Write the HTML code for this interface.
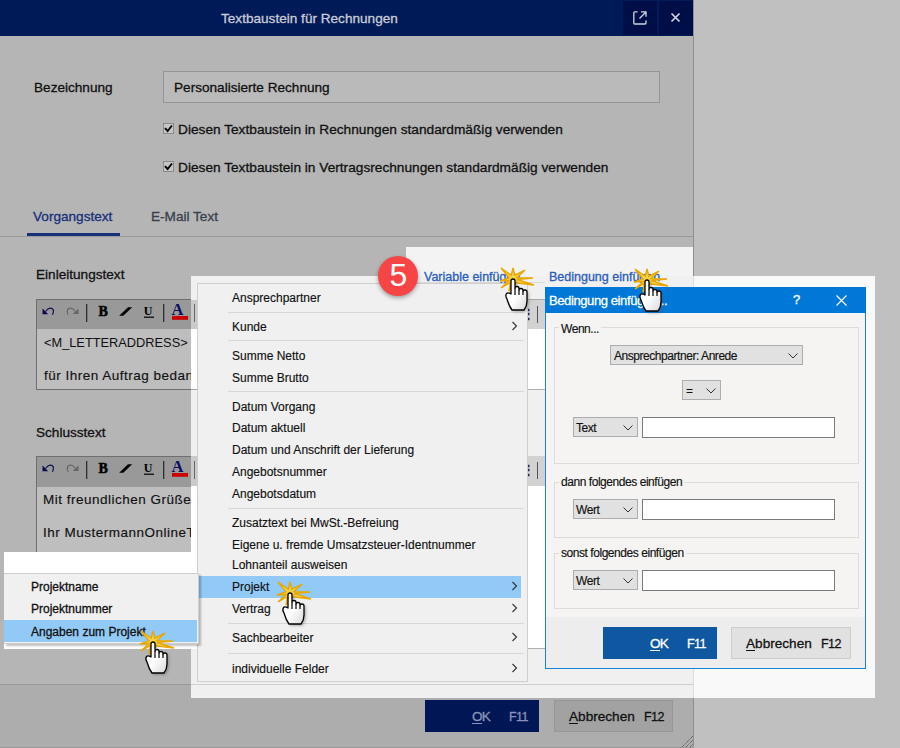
<!DOCTYPE html>
<html><head><meta charset="utf-8">
<style>
*{box-sizing:border-box;margin:0;padding:0}
html,body{width:900px;height:748px;overflow:hidden;background:#c0c0c0;font-family:"Liberation Sans",sans-serif;color:#111}
.a{position:absolute}
.t.m{left:232px;font-size:12px;color:#111;-webkit-text-stroke:0.15px}
.cb{background:#e1e1e1;border:1px solid #adadad}
.inp{background:#fff;border:1px solid #7a7a7a}
.t{position:absolute;white-space:nowrap;line-height:1;-webkit-text-stroke:0.3px currentColor}
</style></head><body>
<svg width="0" height="0" style="position:absolute"><defs>
<filter id="sh" x="-50%" y="-50%" width="200%" height="200%"><feGaussianBlur stdDeviation="1.6"/></filter>
<linearGradient id="hg" x1="0" y1="0" x2="1" y2="1"><stop offset="0.5" stop-color="#fff"/><stop offset="1" stop-color="#d8d8d8"/></linearGradient>
<symbol id="cur" viewBox="-20 -16 48 52" width="48" height="52">
<polygon points="-12.0,-11.0 -1.7,-3.8 0.0,-11.0 1.9,-3.8 12.0,-9.0 4.0,-1.4 20.0,-1.0 4.2,0.5 21.0,6.0 2.0,3.7 -4.0,12.0 -2.5,3.4 -12.0,9.0 -3.9,1.6 -13.0,2.0 -4.0,-1.2" fill="#f4d24a" stroke="#e8a800" stroke-width="1.4" stroke-linejoin="miter" stroke-miterlimit="3"/>
<path d="M-6 20Q-8 17 -6.5 14.5Q-5 13 -2 15V2Q-2 0 0 0Q2 0 2 2V9Q2 7.5 4 7.5Q6 7.5 6 9.5V11Q6 9.5 8 9.5Q10 9.5 10 11.5V12.5Q10 11 12 11Q14 11 14 13V22Q14 27 11 31H-1Q-4 27 -6 20Z" fill="#555" opacity="0.55" filter="url(#sh)" transform="translate(1.5,1.5)"/>
<path d="M-6 20Q-8 17 -6.5 14.5Q-5 13 -2 15V2Q-2 0 0 0Q2 0 2 2V9Q2 7.5 4 7.5Q6 7.5 6 9.5V11Q6 9.5 8 9.5Q10 9.5 10 11.5V12.5Q10 11 12 11Q14 11 14 13V22Q14 27 11 31H-1Q-4 27 -6 20Z" fill="url(#hg)" stroke="#000" stroke-width="1.3" stroke-linejoin="round"/>
<path d="M2 9V16M6 11V16M10 12.5V16" stroke="#000" stroke-width="1.2"/>
</symbol></defs></svg>
<!-- main dialog -->
<div class="a" style="left:0;top:0;width:694px;height:748px;background:#b5b5b5;border-right:1px solid #8f8f8f"></div>
<div class="a" style="left:0;top:0;width:693px;height:36px;background:#001a57"></div>
<div class="t" style="left:221px;top:12px;font-size:13.6px;color:#c9ccd6">Textbaustein für Rechnungen</div>
<div class="a" style="left:623px;top:1px;width:34px;height:34px;background:#000e47"></div>
<div class="a" style="left:659px;top:1px;width:34px;height:34px;background:#000e47"></div>
<svg class="a" style="left:631px;top:9px" width="18" height="18" viewBox="0 0 18 18"><path d="M6.5 2.8H3.8Q2.8 2.8 2.8 3.8V14Q2.8 15 3.8 15H14Q15 15 15 14V11.5M8.5 9.5L14.5 3.5M10 2.8H15V7.8" fill="none" stroke="#d0d4e0" stroke-width="1.3"/></svg>
<svg class="a" style="left:670px;top:12px" width="11" height="11" viewBox="0 0 11 11"><path d="M1.5 1.5L9.5 9.5M9.5 1.5L1.5 9.5" stroke="#d0d4e0" stroke-width="1.7"/></svg>

<div class="t" style="left:34px;top:81px;font-size:13.6px">Bezeichnung</div>
<div class="a" style="left:163px;top:71px;width:497px;height:32px;background:#bababa;border:1px solid #959595"></div>
<div class="t" style="left:174px;top:81px;font-size:13.6px">Personalisierte Rechnung</div>

<div class="a" style="left:163px;top:123px;width:11px;height:11px;border:1px solid #8a8a8a;background:#c6c6c6"></div>
<svg class="a" style="left:163px;top:123px" width="11" height="11" viewBox="0 0 11 11"><path d="M2 5.2L4.6 8L9 2.5" fill="none" stroke="#000" stroke-width="1.9"/></svg>
<div class="t" style="left:178px;top:123px;font-size:13.7px">Diesen Textbaustein in Rechnungen standardmäßig verwenden</div>
<div class="a" style="left:163px;top:161px;width:11px;height:11px;border:1px solid #8a8a8a;background:#c6c6c6"></div>
<svg class="a" style="left:163px;top:161px" width="11" height="11" viewBox="0 0 11 11"><path d="M2 5.2L4.6 8L9 2.5" fill="none" stroke="#000" stroke-width="1.9"/></svg>
<div class="t" style="left:178px;top:161px;font-size:13.7px">Diesen Textbaustein in Vertragsrechnungen standardmäßig verwenden</div>

<div class="t" style="left:33px;top:210px;font-size:13.6px;color:#16307a">Vorgangstext</div>
<div class="t" style="left:151px;top:210px;font-size:13.6px;color:#3a3f4e">E-Mail Text</div>
<div class="a" style="left:0;top:236px;width:693px;height:1px;background:#9a9a9a"></div>
<div class="a" style="left:27px;top:233px;width:93px;height:3px;background:#16307a"></div>

<div class="t" style="left:36px;top:268px;font-size:13.6px">Einleitungstext</div>
<div class="a" style="left:36px;top:299px;width:620px;height:91px;border:1px solid #6f6f6f;background:#bebebe"></div>
<div class="a" style="left:37px;top:300px;width:618px;height:29px;background:#999"></div>
<svg class="a" style="left:37px;top:300px" width="154" height="29" viewBox="0 0 154 29">
<path d="M5.5 8.5V14.2H11.2Z" fill="#0a0a50"/>
<path d="M8.5 11.5Q11 8 13.5 8.2Q17 8.6 16.3 12Q16 13.5 15.5 14.8" fill="none" stroke="#0a0a50" stroke-width="1.2"/>
<path d="M41.5 8.5V14H35.8Z" fill="#666"/>
<path d="M38.5 11.5Q36 8 33.5 8.2Q30 8.6 30.3 12Q30.6 13.5 31.2 14.8" fill="none" stroke="#666" stroke-width="1.2"/>
<rect x="49" y="4" width="1.3" height="18" fill="#2e2e2e"/>
<text x="61.5" y="16" font-family="Liberation Serif" font-weight="bold" font-size="14" fill="#000" stroke="#000" stroke-width="0.5">B</text>
<path d="M82.2 15.7H86.3L95.2 7.2H91Z" fill="#000"/>
<text x="106.8" y="15" font-family="Liberation Serif" font-weight="bold" font-size="12" fill="#000">U</text>
<rect x="107" y="16.6" width="10" height="1.2" fill="#000"/>
<rect x="126" y="4" width="1.3" height="18" fill="#2e2e2e"/>
<text x="134.5" y="15" font-family="Liberation Serif" font-weight="bold" font-size="16.5" fill="#0d0d5e">A</text>
<rect x="135" y="16" width="16" height="3.8" fill="#c80000"/>
</svg>
<div class="t" style="left:44px;top:337px;font-size:12.8px;-webkit-text-stroke:0">&lt;M_LETTERADDRESS&gt;</div>
<div class="t" style="left:44px;top:369px;font-size:13.5px;letter-spacing:0.5px;-webkit-text-stroke:0.15px">für Ihren Auftrag bedanken wir uns</div>

<div class="t" style="left:36px;top:426px;font-size:13.6px">Schlusstext</div>
<div class="a" style="left:36px;top:456px;width:620px;height:193px;border:1px solid #6f6f6f;background:#bebebe"></div>
<div class="a" style="left:37px;top:457px;width:618px;height:30px;background:#999"></div>
<svg class="a" style="left:37px;top:457px" width="154" height="29" viewBox="0 0 154 29">
<path d="M5.5 8.5V14.2H11.2Z" fill="#0a0a50"/>
<path d="M8.5 11.5Q11 8 13.5 8.2Q17 8.6 16.3 12Q16 13.5 15.5 14.8" fill="none" stroke="#0a0a50" stroke-width="1.2"/>
<path d="M41.5 8.5V14H35.8Z" fill="#666"/>
<path d="M38.5 11.5Q36 8 33.5 8.2Q30 8.6 30.3 12Q30.6 13.5 31.2 14.8" fill="none" stroke="#666" stroke-width="1.2"/>
<rect x="49" y="4" width="1.3" height="18" fill="#2e2e2e"/>
<text x="61.5" y="16" font-family="Liberation Serif" font-weight="bold" font-size="14" fill="#000" stroke="#000" stroke-width="0.5">B</text>
<path d="M82.2 15.7H86.3L95.2 7.2H91Z" fill="#000"/>
<text x="106.8" y="15" font-family="Liberation Serif" font-weight="bold" font-size="12" fill="#000">U</text>
<rect x="107" y="16.6" width="10" height="1.2" fill="#000"/>
<rect x="126" y="4" width="1.3" height="18" fill="#2e2e2e"/>
<text x="134.5" y="15" font-family="Liberation Serif" font-weight="bold" font-size="16.5" fill="#0d0d5e">A</text>
<rect x="135" y="16" width="16" height="3.8" fill="#c80000"/>
</svg>
<div class="t" style="left:43px;top:493px;font-size:13.5px;letter-spacing:0.5px;-webkit-text-stroke:0.15px">Mit freundlichen Grüßen</div>
<div class="t" style="left:43px;top:526px;font-size:13.5px;letter-spacing:0.5px;-webkit-text-stroke:0.15px">Ihr MustermannOnlineTeam</div>

<!-- footer -->
<div class="a" style="left:0;top:684px;width:693px;height:64px;background:#adadad;border-top:1px solid #999"></div>
<div class="a" style="left:0;top:747px;width:694px;height:1px;background:#9a9a9a"></div>
<svg class="a" style="left:682px;top:736px" width="11" height="11" viewBox="0 0 11 11"><path d="M0 11L11 0M4 11L11 4M8 11L11 8" stroke="#505050" stroke-width="0.9" stroke-dasharray="1.2 0.6"/></svg>
<div class="a" style="left:425px;top:700px;width:114px;height:32px;background:#001655"></div>
<div class="t" style="left:472px;top:710px;font-size:13.6px;letter-spacing:-0.8px;color:#8c93b8">OK</div><div class="a" style="left:472px;top:723px;width:10px;height:1px;background:#8c93b8"></div>
<div class="t" style="left:509px;top:711px;font-size:12.5px;letter-spacing:-0.6px;color:#8c93b8">F11</div>
<div class="a" style="left:554px;top:700px;width:119px;height:32px;background:#a2a2a2;border:1px solid #969696"></div>
<div class="t" style="left:569px;top:710px;font-size:13.6px">Abbrechen</div><div class="a" style="left:569px;top:723px;width:9px;height:1px;background:#111"></div>
<div class="t" style="left:644px;top:711px;font-size:12.5px;letter-spacing:-0.6px">F12</div>

<!-- overlay light panels -->
<div class="a" style="left:406px;top:247px;width:287px;height:40px;background:#f3f3f3"></div>
<div class="a" style="left:191px;top:276px;width:684px;height:422px;background:#f0f0f0"></div>
<div class="a" style="left:694px;top:276px;width:181px;height:422px;background:#f9f9f9"></div>
<div class="a" style="left:693px;top:276px;width:1px;height:422px;background:#dcdcdc"></div>
<div class="a" style="left:191px;top:684px;width:502px;height:1px;background:#cfcfcf"></div>



<!-- underlying undimmed editor parts inside overlay -->
<div class="a" style="left:191px;top:300px;width:6px;height:29px;background:#cacaca"></div>
<div class="a" style="left:194px;top:304px;width:1px;height:18px;background:#666"></div>
<div class="a" style="left:191px;top:329px;width:6px;height:60px;background:#fff"></div>
<div class="a" style="left:191px;top:389px;width:6px;height:1px;background:#a8a8a8"></div>
<div class="a" style="left:191px;top:456px;width:6px;height:30px;background:#cacaca"></div>
<div class="a" style="left:194px;top:461px;width:1px;height:18px;background:#666"></div>
<div class="a" style="left:191px;top:486px;width:6px;height:66px;background:#fff"></div>
<div class="a" style="left:527px;top:299px;width:18px;height:1px;background:#a8a8a8"></div>
<div class="a" style="left:527px;top:300px;width:18px;height:29px;background:#d2d2d2"></div>
<div class="a" style="left:527px;top:329px;width:18px;height:60px;background:#fff"></div>
<div class="a" style="left:527px;top:389px;width:18px;height:1px;background:#b0b0b0"></div>
<div class="a" style="left:527px;top:456px;width:18px;height:30px;background:#d2d2d2"></div>
<div class="a" style="left:527px;top:486px;width:18px;height:162px;background:#fff"></div>
<div class="a" style="left:527px;top:648px;width:18px;height:1px;background:#b0b0b0"></div>
<div class="a" style="left:537px;top:306px;width:1px;height:17px;background:#555"></div>
<div class="a" style="left:537px;top:462px;width:1px;height:17px;background:#555"></div>
<div class="t" style="left:522px;top:307px;font-size:13px;color:#222">&#8942;</div>
<div class="t" style="left:522px;top:463px;font-size:13px;color:#222">&#8942;</div>

<!-- top strip content -->
<div class="a" style="left:406px;top:282px;width:139px;height:1px;background:#dadada"></div>
<div class="t" style="left:424px;top:271px;font-size:12.5px;color:#2a5cbf">Variable einfügen</div>
<div class="t" style="left:549px;top:271px;font-size:12.5px;color:#2a5cbf">Bedingung einfügen</div>
<!-- context menu -->
<div class="a" style="left:197px;top:283px;width:331px;height:399px;background:#f0f0f0;border:1px solid #cfcfcf"></div>
<div class="a" style="left:199px;top:576px;width:322px;height:22px;background:#91c9f7"></div>
<div class="t m" style="top:292px">Ansprechpartner</div>
<div class="t m" style="top:321px">Kunde</div>
<svg class="a" style="left:511px;top:321px" width="7" height="10" viewBox="0 0 7 10"><path d="M1.5 1L5.5 5L1.5 9" fill="none" stroke="#333" stroke-width="1.1"/></svg>
<div class="t m" style="top:350px">Summe Netto</div>
<div class="t m" style="top:372px">Summe Brutto</div>
<div class="t m" style="top:401px">Datum Vorgang</div>
<div class="t m" style="top:422px">Datum aktuell</div>
<div class="t m" style="top:444px">Datum und Anschrift der Lieferung</div>
<div class="t m" style="top:466px">Angebotsnummer</div>
<div class="t m" style="top:488px">Angebotsdatum</div>
<div class="t m" style="top:517px">Zusatztext bei MwSt.-Befreiung</div>
<div class="t m" style="top:539px">Eigene u. fremde Umsatzsteuer-Identnummer</div>
<div class="t m" style="top:559px">Lohnanteil ausweisen</div>
<div class="t m" style="top:581px">Projekt</div>
<svg class="a" style="left:511px;top:581px" width="7" height="10" viewBox="0 0 7 10"><path d="M1.5 1L5.5 5L1.5 9" fill="none" stroke="#333" stroke-width="1.1"/></svg>
<div class="t m" style="top:603px">Vertrag</div>
<svg class="a" style="left:511px;top:603px" width="7" height="10" viewBox="0 0 7 10"><path d="M1.5 1L5.5 5L1.5 9" fill="none" stroke="#333" stroke-width="1.1"/></svg>
<div class="t m" style="top:632px">Sachbearbeiter</div>
<svg class="a" style="left:511px;top:632px" width="7" height="10" viewBox="0 0 7 10"><path d="M1.5 1L5.5 5L1.5 9" fill="none" stroke="#333" stroke-width="1.1"/></svg>
<div class="t m" style="top:663px">individuelle Felder</div>
<svg class="a" style="left:511px;top:663px" width="7" height="10" viewBox="0 0 7 10"><path d="M1.5 1L5.5 5L1.5 9" fill="none" stroke="#333" stroke-width="1.1"/></svg>
<div class="a" style="left:228px;top:312px;width:296px;height:1px;background:#d7d7d7"></div>
<div class="a" style="left:228px;top:340px;width:296px;height:1px;background:#d7d7d7"></div>
<div class="a" style="left:228px;top:391px;width:296px;height:1px;background:#d7d7d7"></div>
<div class="a" style="left:228px;top:508px;width:296px;height:1px;background:#d7d7d7"></div>
<div class="a" style="left:228px;top:623px;width:296px;height:1px;background:#d7d7d7"></div>
<div class="a" style="left:228px;top:653px;width:296px;height:1px;background:#d7d7d7"></div>

<!-- Bedingung dialog -->
<div class="a" style="left:545px;top:287px;width:321px;height:382px;background:#f5f4f3;border:1px solid #1883d7"></div>
<div class="a" style="left:545px;top:287px;width:321px;height:26px;background:#0078d7"></div>
<div class="t" style="left:549px;top:294px;font-size:13px;letter-spacing:-0.4px;color:#fff">Bedingung einfügen...</div>
<div class="t" style="left:793px;top:293px;font-size:13px;color:#fff">?</div>
<svg class="a" style="left:836px;top:295px" width="11" height="11" viewBox="0 0 11 11"><path d="M0.5 0.5L10.5 10.5M10.5 0.5L0.5 10.5" stroke="#fff" stroke-width="1.2"/></svg>
<div class="a" style="left:554px;top:327px;width:305px;height:137px;border:1px solid #dcdcdc"></div>
<div class="t" style="left:559px;top:323px;font-size:12px;letter-spacing:-0.45px;-webkit-text-stroke:0.15px;background:#f5f4f3;padding:0 2px">Wenn...</div>
<div class="a cb" style="left:610px;top:345px;width:193px;height:20px"></div>
<div class="t" style="left:614px;top:350px;font-size:12px;letter-spacing:-0.45px;-webkit-text-stroke:0.15px">Ansprechpartner: Anrede</div>
<div class="a cb" style="left:682px;top:380px;width:39px;height:20px"></div>
<div class="t" style="left:686px;top:385px;font-size:12px;letter-spacing:-0.45px;-webkit-text-stroke:0.15px">=</div>
<div class="a cb" style="left:573px;top:417px;width:65px;height:20px"></div>
<div class="t" style="left:576px;top:422px;font-size:12px;letter-spacing:-0.45px;-webkit-text-stroke:0.15px">Text</div>
<div class="a inp" style="left:642px;top:417px;width:193px;height:21px"></div>

<div class="a" style="left:554px;top:482px;width:305px;height:56px;border:1px solid #dcdcdc"></div>
<div class="t" style="left:559px;top:476px;font-size:12px;letter-spacing:-0.45px;-webkit-text-stroke:0.15px;background:#f5f4f3;padding:0 2px">dann folgendes einfügen</div>
<div class="a cb" style="left:573px;top:499px;width:65px;height:20px"></div>
<div class="t" style="left:576px;top:504px;font-size:12px;letter-spacing:-0.45px;-webkit-text-stroke:0.15px">Wert</div>
<div class="a inp" style="left:642px;top:499px;width:193px;height:21px"></div>

<div class="a" style="left:554px;top:553px;width:305px;height:56px;border:1px solid #dcdcdc"></div>
<div class="t" style="left:559px;top:547px;font-size:12px;letter-spacing:-0.45px;-webkit-text-stroke:0.15px;background:#f5f4f3;padding:0 2px">sonst folgendes einfügen</div>
<div class="a cb" style="left:573px;top:570px;width:65px;height:20px"></div>
<div class="t" style="left:576px;top:575px;font-size:12px;letter-spacing:-0.45px;-webkit-text-stroke:0.15px">Wert</div>
<div class="a inp" style="left:642px;top:570px;width:193px;height:21px"></div>

<div class="a" style="left:546px;top:617px;width:319px;height:51px;background:#ededed"></div>
<div class="a" style="left:603px;top:627px;width:114px;height:32px;background:#0f57a0"></div>
<div class="t" style="left:650px;top:637px;font-size:13.6px;letter-spacing:-0.8px;color:#fff">OK</div><div class="a" style="left:650px;top:650px;width:10px;height:1px;background:#fff"></div>
<div class="t" style="left:687px;top:638px;font-size:12.5px;letter-spacing:-0.6px;color:#fff">F11</div>
<div class="a" style="left:731px;top:627px;width:120px;height:32px;background:#e1e1e1;border:1px solid #cdcdcd"></div>
<div class="t" style="left:746px;top:637px;font-size:13.6px">Abbrechen</div><div class="a" style="left:746px;top:650px;width:9px;height:1px;background:#111"></div>
<div class="t" style="left:821px;top:638px;font-size:12.5px;letter-spacing:-0.6px">F12</div>
<svg class="a" style="left:788px;top:353px" width="10" height="6" viewBox="0 0 10 6"><path d="M0.5 0.5L5 5L9.5 0.5" fill="none" stroke="#333" stroke-width="1"/></svg>
<svg class="a" style="left:706px;top:388px" width="10" height="6" viewBox="0 0 10 6"><path d="M0.5 0.5L5 5L9.5 0.5" fill="none" stroke="#333" stroke-width="1"/></svg>
<svg class="a" style="left:623px;top:425px" width="10" height="6" viewBox="0 0 10 6"><path d="M0.5 0.5L5 5L9.5 0.5" fill="none" stroke="#333" stroke-width="1"/></svg>
<svg class="a" style="left:623px;top:507px" width="10" height="6" viewBox="0 0 10 6"><path d="M0.5 0.5L5 5L9.5 0.5" fill="none" stroke="#333" stroke-width="1"/></svg>
<svg class="a" style="left:623px;top:578px" width="10" height="6" viewBox="0 0 10 6"><path d="M0.5 0.5L5 5L9.5 0.5" fill="none" stroke="#333" stroke-width="1"/></svg>


<!-- submenu -->
<div class="a" style="left:4px;top:552px;width:193px;height:97px;background:#fff"></div>
<div class="a" style="left:4px;top:573px;width:195px;height:71px;background:#f0f0f0;border:1px solid #cfcfcf;border-left:none;box-shadow:2px 2px 2px rgba(0,0,0,.25)"></div>
<div class="a" style="left:4px;top:620px;width:193px;height:22px;background:#91c9f7"></div>
<div class="t" style="left:31px;top:581px;font-size:12px">Projektname</div>
<div class="t" style="left:31px;top:603px;font-size:12px">Projektnummer</div>
<div class="t" style="left:31px;top:626px;font-size:12px">Angaben zum Projekt</div>
<!-- cursors -->
<svg class="a" style="left:492.5px;top:263.0px" width="48" height="52"><use href="#cur"/></svg>
<svg class="a" style="left:627.3px;top:263.5px" width="48" height="52"><use href="#cur"/></svg>
<svg class="a" style="left:269.7px;top:577.3px" width="48" height="52"><use href="#cur"/></svg>
<svg class="a" style="left:132.7px;top:625.5px" width="48" height="52"><use href="#cur"/></svg>
<!-- badge -->
<div class="a" style="left:378px;top:256px;width:40px;height:40px;border-radius:50%;background:#f74545;box-shadow:0 2px 4px rgba(0,0,0,.35)"></div>
<div class="t" style="left:378.5px;top:259px;width:40px;text-align:center;font-size:32px;color:#fff;-webkit-text-stroke:0">5</div>
</body></html>
